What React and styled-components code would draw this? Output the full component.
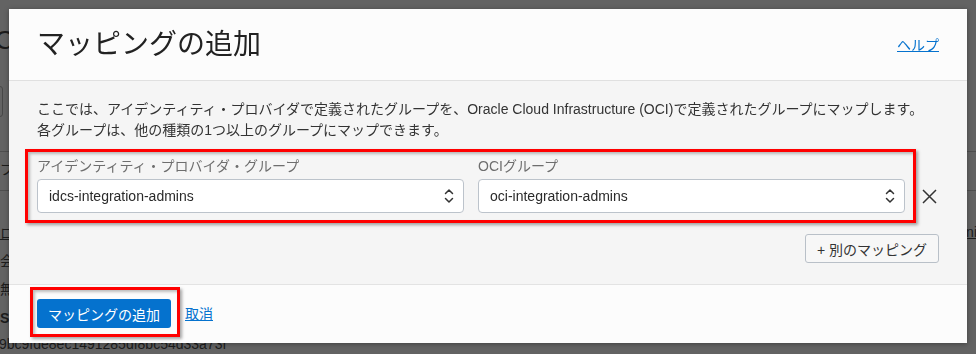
import React from "react";
import styled, { createGlobalStyle } from "styled-components";

const Global = createGlobalStyle`
  html, body { margin: 0; padding: 0; }
  body {
    background: #636363;
    font-family: "Liberation Sans", "Noto Sans CJK JP", sans-serif;
    overflow: hidden;
  }
  * { box-sizing: border-box; }
`;

/* ---------- dimmed page behind the dialog ---------- */
const Page = styled.div`
  width: 976px;
  height: 354px;
  color: #1c1c1c;
  font-size: 14px;
  display: flex;
  flex-direction: column;
`;
const PageHeading = styled.div`
  height: 86px;
  padding-top: 24px;
  margin-left: -5px;
  font-size: 26px;
  line-height: 32px;
`;
const PageInput = styled.div`
  width: 44px;
  height: 31px;
  margin-left: -41px;
  border: 1px solid #474747;
  border-radius: 3px;
`;
const PageRule = styled.div`
  height: ${(p) => p.$gap}px;
  border-bottom: 1px solid #4e4e4e;
`;
const PageRow = styled.div`
  height: ${(p) => p.$h}px;
  display: flex;
  align-items: center;
  justify-content: space-between;
  font-weight: ${(p) => (p.$bold ? 700 : 400)};
  text-decoration: ${(p) => (p.$u ? "underline" : "none")};
`;
const Edge = styled.span`
  margin-right: ${(p) => p.$mr || 0}px;
  margin-left: ${(p) => p.$ml || 0}px;
`;

/* ---------- dialog ---------- */
const Dialog = styled.div`
  position: fixed;
  left: 9px;
  top: 9px;
  width: 958px;
  height: 334px;
  display: flex;
  flex-direction: column;
  background: #f5f5f5;
  box-shadow: 0 1px 5px rgba(0, 0, 0, 0.35);
  color: #333;
`;
const Header = styled.div`
  height: 72px;
  flex: none;
  display: flex;
  align-items: center;
  justify-content: space-between;
  padding: 0 28px;
  background: #fcfcfc;
  border-bottom: 1px solid #e0e0e0;
`;
const Title = styled.h1`
  margin: 0;
  font-size: 28px;
  font-weight: 400;
  line-height: 34px;
  color: #222;
`;
const Link = styled.a`
  font-size: 14px;
  line-height: 20px;
  color: #0572ce;
  text-decoration: underline;
  cursor: pointer;
  margin-left: ${(p) => p.$ml || 0}px;
`;
const Body = styled.div`
  height: 204px;
  flex: none;
  padding: 18px 28px 0;
  border-bottom: 1px solid #e3e3e3;
`;
const Description = styled.p`
  margin: 0;
  font-size: 14px;
  line-height: 21px;
  color: #333;
`;
const MappingRow = styled.div`
  margin-top: 15px;
  display: flex;
  align-items: flex-end;
`;
const Highlight = styled.div`
  position: relative;
  &::after {
    content: "";
    position: absolute;
    top: ${(p) => p.$t}px;
    left: ${(p) => p.$l}px;
    right: ${(p) => p.$r}px;
    bottom: ${(p) => p.$b}px;
    border: 3px solid #ff0000;
    box-shadow: 2px 2px 3px rgba(0, 0, 0, 0.35),
      inset 2px 2px 3px rgba(0, 0, 0, 0.25);
    pointer-events: none;
  }
`;
const Fields = styled.div`
  width: 868px;
  display: grid;
  grid-template-columns: 1fr 1fr;
  column-gap: 14px;
`;
const Field = styled.div`
  display: flex;
  flex-direction: column;
`;
const Label = styled.div`
  font-size: 14px;
  line-height: 20px;
  color: #6e6e6e;
  margin-bottom: 3px;
`;
const Select = styled.div`
  height: 34px;
  display: flex;
  align-items: center;
  justify-content: space-between;
  padding: 0 9px 0 11px;
  background: #fff;
  border: 1px solid #bcc3cb;
  border-radius: 4px;
  font-size: 14px;
  color: #2a2a2a;
`;
const RemoveButton = styled.button`
  width: 20px;
  height: 34px;
  margin-left: 14px;
  padding: 0;
  border: 0;
  background: transparent;
  display: flex;
  align-items: center;
  justify-content: center;
  cursor: pointer;
`;
const Actions = styled.div`
  margin-top: 21px;
  display: flex;
  justify-content: flex-end;
`;
const SecondaryButton = styled.button`
  height: 29px;
  padding: 0 11px;
  font-family: inherit;
  font-size: 14px;
  color: #333;
  background: #f7f7f7;
  border: 1px solid #b9c0c8;
  border-radius: 3px;
  cursor: pointer;
`;
const Footer = styled.div`
  flex: 1;
  display: flex;
  align-items: flex-start;
  padding: 14px 28px 0;
  background: #fcfcfc;
`;
const FooterActions = styled.div`
  display: flex;
  align-items: center;
`;
const PrimaryButton = styled.button`
  height: 29px;
  padding: 0 11px;
  font-family: inherit;
  font-size: 14px;
  color: #fff;
  background: #0572ce;
  border: 0;
  border-radius: 3px;
  cursor: pointer;
`;

const Chevrons = () => (
  <svg width="10" height="16" viewBox="0 0 10 16" fill="none">
    <path d="M1.5 5.5L5 2L8.5 5.5" stroke="#333" strokeWidth="1.5" strokeLinecap="round" strokeLinejoin="round" />
    <path d="M1.5 10.5L5 14L8.5 10.5" stroke="#333" strokeWidth="1.5" strokeLinecap="round" strokeLinejoin="round" />
  </svg>
);

const CloseIcon = () => (
  <svg width="15" height="15" viewBox="0 0 15 15" fill="none">
    <path d="M1 1L14 14M14 1L1 14" stroke="#333" strokeWidth="1.5" />
  </svg>
);

export default function App() {
  return (
    <>
      <Global />
      <Page>
        <PageHeading>C</PageHeading>
        <PageInput />
        <PageRule $gap={35} />
        <PageRow $h={32}>
          <Edge>プ</Edge>
        </PageRow>
        <PageRule $gap={7} />
        <PageRow $h={28} />
        <PageRow $h={28} $u>
          <Edge>ロ</Edge>
          <Edge $mr={-1}>ni</Edge>
        </PageRow>
        <PageRow $h={28}>
          <Edge>会</Edge>
        </PageRow>
        <PageRow $h={28}>
          <Edge>無</Edge>
        </PageRow>
        <PageRow $h={32} $bold>
          <Edge>Se</Edge>
        </PageRow>
        <PageRow $h={20}>
          <Edge $ml={-1}>9bc9fde8ec1491285df8bc54d33a73f</Edge>
        </PageRow>
      </Page>

      <Dialog role="dialog">
        <Header>
          <Title>マッピングの追加</Title>
          <Link>ヘルプ</Link>
        </Header>
        <Body>
          <Description>
            ここでは、アイデンティティ・プロバイダで定義されたグループを、Oracle Cloud Infrastructure (OCI)で定義されたグループにマップします。
            <br />
            各グループは、他の種類の1つ以上のグループにマップできます。
          </Description>
          <MappingRow>
            <Highlight $t={-7} $l={-12} $r={-11} $b={-10}>
              <Fields>
                <Field>
                  <Label>アイデンティティ・プロバイダ・グループ</Label>
                  <Select>
                    <span>idcs-integration-admins</span>
                    <Chevrons />
                  </Select>
                </Field>
                <Field>
                  <Label>OCIグループ</Label>
                  <Select>
                    <span>oci-integration-admins</span>
                    <Chevrons />
                  </Select>
                </Field>
              </Fields>
            </Highlight>
            <RemoveButton aria-label="削除">
              <CloseIcon />
            </RemoveButton>
          </MappingRow>
          <Actions>
            <SecondaryButton>+ 別のマッピング</SecondaryButton>
          </Actions>
        </Body>
        <Footer>
          <FooterActions>
            <Highlight $t={-12} $l={-7} $r={-9} $b={-9}>
              <PrimaryButton>マッピングの追加</PrimaryButton>
            </Highlight>
            <Link $ml={14}>取消</Link>
          </FooterActions>
        </Footer>
      </Dialog>
    </>
  );
}
